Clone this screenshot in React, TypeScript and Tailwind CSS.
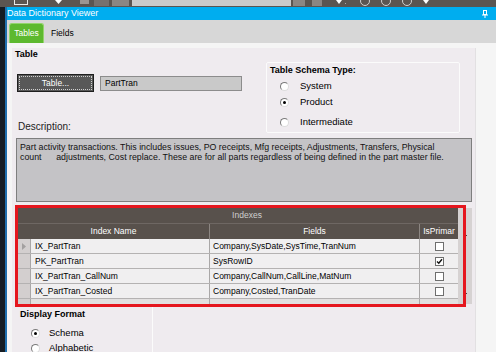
import React from "react";

function Radio({ checked }: { checked?: boolean }) {
  return (
    <div className="w-[9px] h-[9px] rounded-full bg-white border border-t-[#7a7a7a] border-l-[#7a7a7a] border-r-[#dcdcdc] border-b-[#dcdcdc] flex items-center justify-center shrink-0">
      {checked ? <div className="w-[3px] h-[3px] rounded-full bg-black" /> : null}
    </div>
  );
}

function Check({ checked }: { checked?: boolean }) {
  return (
    <div className="w-[9px] h-[9px] bg-white border border-[#6e6e6e] flex items-center justify-center">
      {checked ? (
        <svg width="7" height="7" viewBox="0 0 7 7">
          <path d="M1 3.5 L2.8 5.3 L6 1.3" stroke="#111" strokeWidth="1.4" fill="none" />
        </svg>
      ) : null}
    </div>
  );
}

const rows = [
  { name: "IX_PartTran", fields: "Company,SysDate,SysTime,TranNum", pk: false, sel: true },
  { name: "PK_PartTran", fields: "SysRowID", pk: true, sel: false },
  { name: "IX_PartTran_CallNum", fields: "Company,CallNum,CallLine,MatNum", pk: false, sel: false },
  { name: "IX_PartTran_Costed", fields: "Company,Costed,TranDate", pk: false, sel: false },
];

export default function App() {
  return (
    <div className="w-[496px] h-[352px] overflow-hidden flex flex-col bg-[#5b5551] font-['Liberation_Sans',Arial,sans-serif] text-black">
      {/* top toolbar strip (cut off) */}
      <div className="h-[7px] shrink-0 flex items-start overflow-hidden">
        <div className="ml-[14px] w-[14px] h-[5px] border border-t-0 border-[#e8e8e8]" />
        <svg className="ml-[27px]" width="7" height="5" viewBox="0 0 7 5"><path d="M0 0 L7 0 L3.5 4 Z" fill="#fff" /></svg>
        <div className="ml-[18px] w-[9px] h-[4px] bg-[#9a9592]" />
        <div className="ml-[5px] w-[15px] h-[6px] bg-[#77716e]" />
        <div className="ml-[3px] w-[17px] h-[6px] bg-[#8b8683]" />
        <div className="ml-[3px] w-[159px] h-[6px] bg-[#cbcbcb]" />
        <div className="ml-[2px] w-[12px] h-[6px] bg-[#8b8683]" />
        <div className="ml-[7px] w-[10px] h-[6px] bg-[#8b8683]" />
        <svg className="ml-[14px]" width="6" height="5" viewBox="0 0 6 5"><path d="M0 0 L6 0 L3 4 Z" fill="#fff" /></svg>
        <div className="ml-[3px] mt-[3px] w-[1px] h-[1px] bg-[#aaa]" />
        <div className="ml-[14px] -mt-[4px] w-[10px] h-[10px] rounded-full border border-[#cfcfcf]" />
        <div className="ml-[11px] -mt-[4px] w-[10px] h-[10px] rounded-full border border-[#cfcfcf]" />
        <div className="ml-[11px] -mt-[4px] w-[10px] h-[10px] rounded-full border border-[#cfcfcf]" />
        <svg className="ml-[11px]" width="6" height="5" viewBox="0 0 6 5"><path d="M0 0 L6 0 L3 4 Z" fill="#fff" /></svg>
      </div>

      <div className="flex flex-1 min-h-0">
        {/* left dark edge */}
        <div className="w-[5px] bg-[#151d24] shrink-0" />
        <div className="w-[2px] bg-[#1f6fae] shrink-0" />

        <div className="flex-1 flex flex-col min-w-0">
          {/* title bar */}
          <div className="h-[13px] shrink-0 bg-[#00adef] flex items-center justify-between pr-[8px]">
            <span className="text-white text-[9px] leading-[13px]">Data Dictionary Viewer</span>
            <svg width="6" height="8" viewBox="0 0 6 8">
              <rect x="1.5" y="0.5" width="3" height="4" fill="none" stroke="#fff" />
              <path d="M0 5 H6" stroke="#fff" />
              <path d="M3 5 V8" stroke="#fff" />
            </svg>
          </div>

          {/* tab bar */}
          <div className="h-[23px] shrink-0 bg-[#d7d7d7] flex items-end pl-[2px]">
            <div className="w-[35px] h-[20px] rounded-t-[3px] bg-[#5db92f] border border-[#93d46c] border-b-0 flex items-center justify-center">
              <span className="text-white text-[8.5px]">Tables</span>
            </div>
            <div className="ml-[7px] h-[20px] flex items-center">
              <span className="text-[8.5px] text-black">Fields</span>
            </div>
          </div>

          {/* content area */}
          <div className="flex-1 min-h-0 bg-[#f5f5f5] pt-[5px] pl-[5px] pr-[20px] flex flex-col">
            <div className="flex-1 min-h-0 bg-[#efebef] border-r border-[#e2e0e2] flex flex-col">
              {/* top row */}
              <div className="flex shrink-0">
                <div className="w-[254px] flex flex-col">
                  <div className="pl-[3px] text-[9px] leading-[12px] font-bold">Table</div>
                  <div className="mt-[14px] flex items-start">
                    <div className="ml-[5px] w-[77px] h-[18px] bg-[#585858] border border-[#1e1e1e] p-[1px]">
                      <div className="w-full h-full border border-dotted border-[#cfcfcf] flex items-center justify-center">
                        <span className="text-white text-[8.5px]">Table...</span>
                      </div>
                    </div>
                    <div className="ml-[6px] mt-[2px] w-[142px] h-[15px] bg-[#c9c9c9] border border-[#8c8c8c] flex items-center pl-[4px]">
                      <span className="text-[8.5px]">PartTran</span>
                    </div>
                  </div>
                  <div className="mt-[29px] pl-[6px] text-[10px] leading-[12px] text-[#222]">Description:</div>
                </div>
                <div className="mt-[14px] w-[194px] h-[71px] border border-[#fbfbfb] rounded-[2px] flex flex-col">
                  <div className="pl-[3px] pt-[1px] text-[9px] leading-[12px] font-bold">Table Schema Type:</div>
                  <div className="mt-[3px] h-[14px] flex items-center pl-[13px]">
                    <Radio />
                    <span className="ml-[11px] text-[9.5px]">System</span>
                  </div>
                  <div className="mt-[2px] h-[14px] flex items-center pl-[13px]">
                    <Radio checked />
                    <span className="ml-[11px] text-[9.5px]">Product</span>
                  </div>
                  <div className="mt-[6px] h-[14px] flex items-center pl-[13px]">
                    <Radio />
                    <span className="ml-[11px] text-[9.5px]">Intermediate</span>
                  </div>
                </div>
              </div>

              {/* description */}
              <div className="mt-[5px] ml-[4px] w-[456px] h-[64px] shrink-0 bg-[#c4c3c6] border border-[#7e7e7e] pl-[3px] pt-[3px] text-[8.8px] leading-[10px] text-[#111]">
                <div className="whitespace-nowrap">Part activity transactions. This includes issues, PO receipts, Mfg receipts, Adjustments, Transfers, Physical</div>
                <div className="whitespace-pre">{"count      adjustments, Cost replace. These are for all parts regardless of being defined in the part master file."}</div>
              </div>

              {/* indexes grid */}
              <div className="relative mt-[3px] ml-[3px] h-[102px] shrink-0">
                <div className="ml-[3px] mt-[3px] w-[454px] h-[96px] overflow-hidden flex bg-[#d3cfcf]">
                  <div className="w-[440px] flex flex-col">
                    <div className="h-[16px] shrink-0 bg-[#58514c] flex items-center justify-center pl-[18px] border-b border-[#6e6763]">
                      <span className="text-[8.5px] text-[#cfcfcf]">Indexes</span>
                    </div>
                    <div className="h-[15px] shrink-0 bg-[#58514c] flex text-white text-[8.5px]">
                      <div className="w-[192px] flex items-center justify-center border-r border-[#8c8682]">Index Name</div>
                      <div className="w-[210px] flex items-center justify-center border-r border-[#8c8682]">Fields</div>
                      <div className="w-[38px] flex items-center justify-center">IsPrimar</div>
                    </div>
                    {rows.map((r) => (
                      <div key={r.name} className="h-[15px] shrink-0 flex bg-[#f0eff0] border-b border-[#b4b2b2] text-[8.5px]">
                        <div className="w-[13px] bg-[#d3cfcf] border-r border-[#a9a7a7] flex items-center justify-center">
                          {r.sel ? (
                            <svg width="4" height="7" viewBox="0 0 4 7"><path d="M0 0 L4 3.5 L0 7 Z" fill="#a3a0a0" /></svg>
                          ) : null}
                        </div>
                        <div className="w-[179px] border-r border-[#a9a7a7] flex items-center pl-[4px] whitespace-nowrap">{r.name}</div>
                        <div className="w-[210px] border-r border-[#a9a7a7] flex items-center pl-[3px] whitespace-nowrap">{r.fields}</div>
                        <div className="w-[38px] flex items-center justify-center">
                          <Check checked={r.pk} />
                        </div>
                      </div>
                    ))}
                    <div className="h-[15px] shrink-0 flex bg-[#e2e0e0]">
                      <div className="w-[13px] bg-[#d3cfcf] border-r border-[#a9a7a7]" />
                      <div className="w-[179px] border-r border-[#a9a7a7]" />
                      <div className="w-[210px] border-r border-[#a9a7a7]" />
                      <div className="w-[38px]" />
                    </div>
                  </div>
                  <div className="w-[14px] bg-[#d6d2d2] flex flex-col items-center">
                    <div className="mt-[27px] w-[3px] h-[1px] bg-[#444]" />
                    <div className="mt-[57px] w-[3px] h-[1px] bg-[#444]" />
                  </div>
                </div>
                <div className="absolute left-0 top-0 w-[451px] h-[102px] border-[3px] border-[#e5161e] pointer-events-none" />
              </div>

              {/* display format */}
              <div className="ml-[4px] w-[137px] flex-1 border-r border-[#fbfbfb] flex flex-col">
                <div className="mt-[1px] pl-[4px] text-[9px] leading-[12px] font-bold">Display Format</div>
                <div className="mt-[6px] h-[14px] flex items-center pl-[15px]">
                  <Radio checked />
                  <span className="ml-[9px] text-[9.5px]">Schema</span>
                </div>
                <div className="mt-[1px] h-[14px] flex items-center pl-[15px]">
                  <Radio />
                  <span className="ml-[9px] text-[9.5px]">Alphabetic</span>
                </div>
              </div>
            </div>
          </div>
        </div>
      </div>
    </div>
  );
}
